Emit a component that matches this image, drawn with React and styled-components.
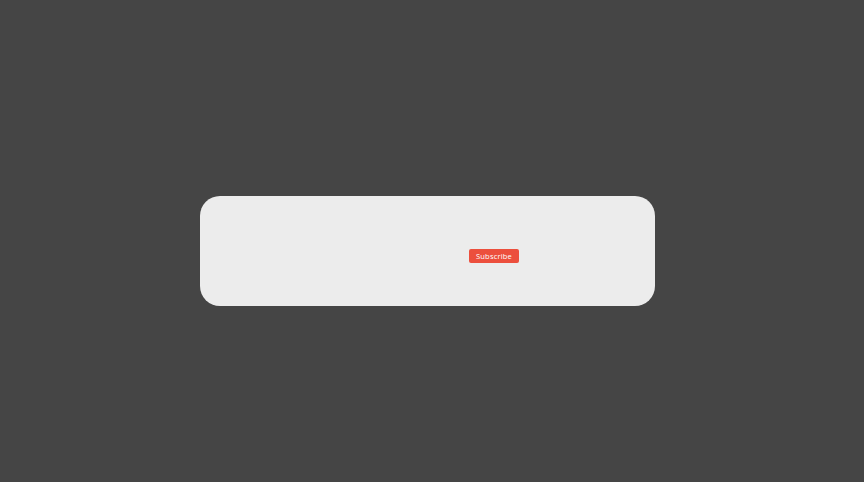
import styled, { createGlobalStyle } from "styled-components";

const GlobalStyle = createGlobalStyle`
  html, body {
    margin: 0;
    padding: 0;
    background: #454545;
    font-family: "Open Sans", "Liberation Sans", sans-serif;
  }
`;

const Page = styled.main`
  min-height: 100vh;
  box-sizing: border-box;
  padding: 196px 0 0 200px;
`;

const Card = styled.form`
  width: 455px;
  height: 110px;
  box-sizing: border-box;
  background: #ececec;
  border-radius: 20px;
  display: flex;
  align-items: center;
  padding: 9px 0 0 269px;
`;

const Button = styled.button`
  width: 50px;
  height: 14px;
  padding: 0;
  border: none;
  border-radius: 2px;
  background: #ec4f3d;
  color: #fff;
  font-family: inherit;
  font-size: 7.5px;
  line-height: 14px;
  letter-spacing: 0.2px;
  cursor: pointer;
`;

function App() {
  return (
    <>
      <GlobalStyle />
      <Page>
        <Card onSubmit={(e) => e.preventDefault()}>
          <Button type="submit">Subscribe</Button>
        </Card>
      </Page>
    </>
  );
}

export default App;
